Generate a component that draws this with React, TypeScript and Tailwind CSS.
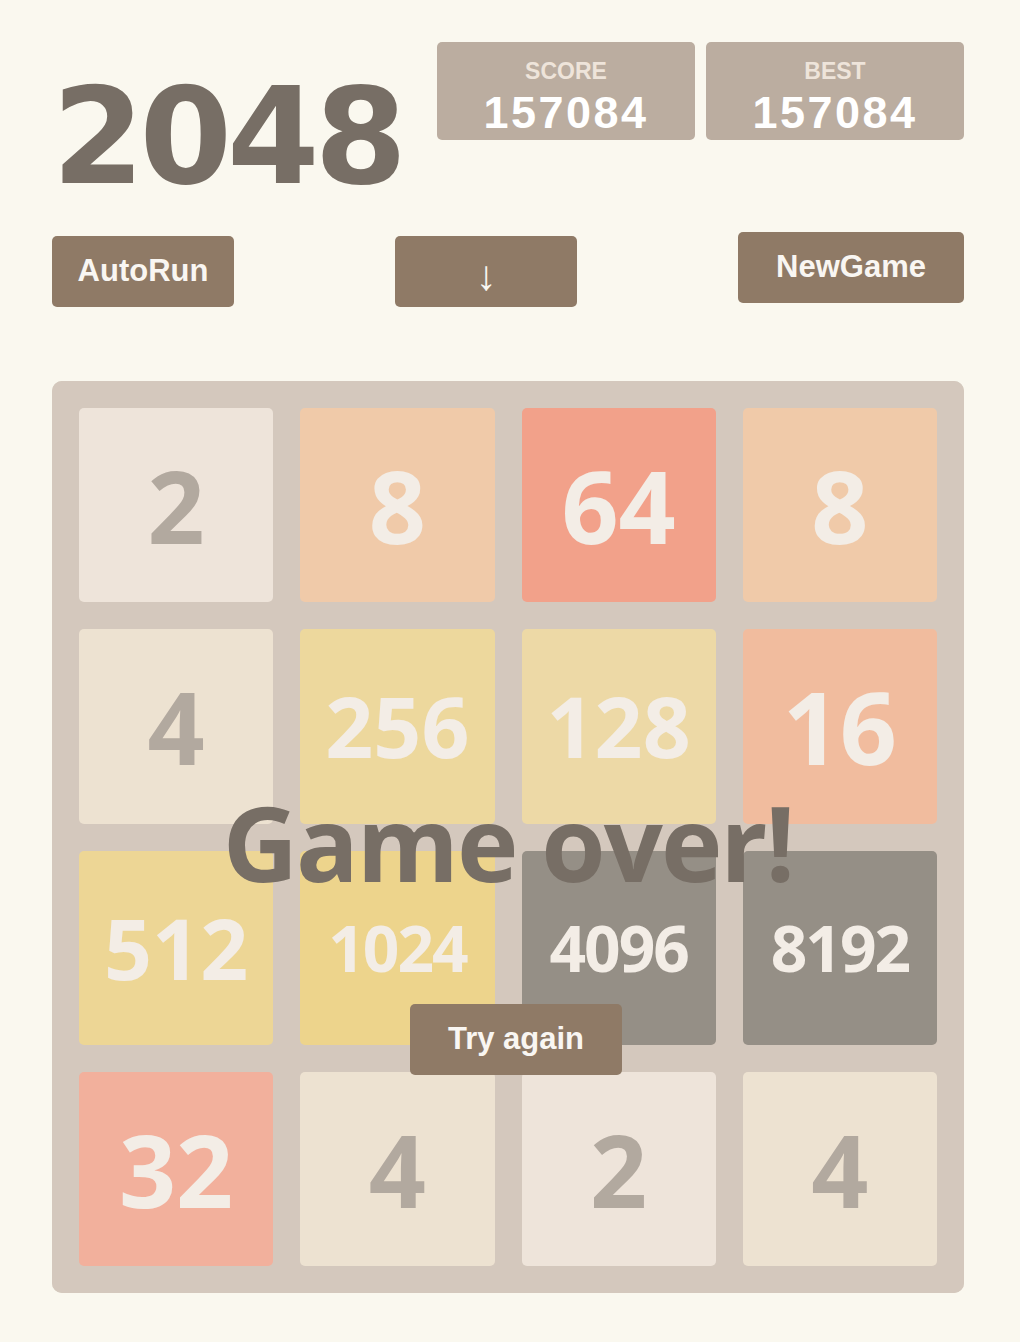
import React from "react";

type Cell = number;

const board: Cell[][] = [
  [2, 8, 64, 8],
  [4, 256, 128, 16],
  [512, 1024, 4096, 8192],
  [32, 4, 2, 4],
];

// classic 2048 tile palette
const tileStyles: Record<number, string> = {
  2: "bg-[#eee4da] text-[#776e65]",
  4: "bg-[#ede0c8] text-[#776e65]",
  8: "bg-[#f2b179] text-[#f9f6f2]",
  16: "bg-[#f59563] text-[#f9f6f2]",
  32: "bg-[#f67c5f] text-[#f9f6f2]",
  64: "bg-[#f65e3b] text-[#f9f6f2]",
  128: "bg-[#edcf72] text-[#f9f6f2]",
  256: "bg-[#edcc61] text-[#f9f6f2]",
  512: "bg-[#edc850] text-[#f9f6f2]",
  1024: "bg-[#edc53f] text-[#f9f6f2]",
  2048: "bg-[#edc22e] text-[#f9f6f2]",
};

const sizeFor = (n: number) => {
  if (n >= 1000) return "text-[64px] tracking-[-2px]";
  if (n >= 100) return "text-[84px]";
  return "text-[100px]";
};

function Tile({ value }: { value: number }) {
  const color = tileStyles[value] ?? "bg-[#3c3a32] text-[#f9f6f2]";
  return (
    <div
      className={`flex items-center justify-center rounded-[5px] font-bold leading-none ${color} ${sizeFor(value)}`}
      style={{ fontFamily: '"Open Sans", sans-serif' }}
    >
      {value}
    </div>
  );
}

function ScoreBox({ label, value }: { label: string; value: number }) {
  return (
    <div className="flex h-[98px] w-[258px] flex-col items-center rounded-[5px] bg-[#bbada0] pt-[18px] font-['Liberation_Sans',sans-serif] font-bold">
      <span className="text-[23px] leading-none text-[#eee4da]">{label}</span>
      <span className="mt-[7px] text-[45px] leading-none tracking-[2.5px] text-white">{value}</span>
    </div>
  );
}

const btn =
  "flex h-[71px] items-center justify-center rounded-[5px] bg-[#8f7a66] font-['Liberation_Sans',sans-serif] text-[31px] font-bold text-[#f9f6f2]";

export default function App() {
  return (
    <div className="min-h-[1342px] w-full bg-[#faf8ef]">
      <div className="ml-[52px] w-[912px] pt-[42px]">
        {/* header */}
        <div className="flex h-[190px] items-start justify-between">
          <h1
            className="mt-[29px] text-[133px] font-bold leading-none tracking-[-5px] text-[#776e65]"
            style={{ fontFamily: '"DejaVu Sans", sans-serif' }}
          >
            2048
          </h1>
          <div className="flex gap-[11px]">
            <ScoreBox label="SCORE" value={157084} />
            <ScoreBox label="BEST" value={157084} />
          </div>
        </div>

        {/* controls */}
        <div className="flex items-start justify-between">
          <button className={`${btn} mt-[4px] w-[182px]`}>AutoRun</button>
          <button className={`${btn} mt-[4px] w-[182px] pt-[8px] text-[42px] font-normal`}>↓</button>
          <button className={`${btn} w-[226px]`}>NewGame</button>
        </div>

        {/* board */}
        <div className="relative mt-[74px] h-[912px] w-[912px] rounded-[10px] bg-[#bbada0]">
          <div className="grid h-full grid-cols-4 grid-rows-4 gap-[27px] p-[27px]">
            {board.flat().map((v, i) => (
              <Tile key={i} value={v} />
            ))}
          </div>

          <div className="absolute inset-0 flex flex-col items-center rounded-[10px] bg-[rgba(238,228,218,0.5)] pt-[409px]">
            <p
              className="text-[104px] font-bold leading-none tracking-[-2px] text-[#776e65]"
              style={{ fontFamily: '"Open Sans", sans-serif' }}
            >
              Game over!
            </p>
            <button className={`${btn} ml-[16px] mt-[110px] w-[212px]`}>Try again</button>
          </div>
        </div>
      </div>
    </div>
  );
}
